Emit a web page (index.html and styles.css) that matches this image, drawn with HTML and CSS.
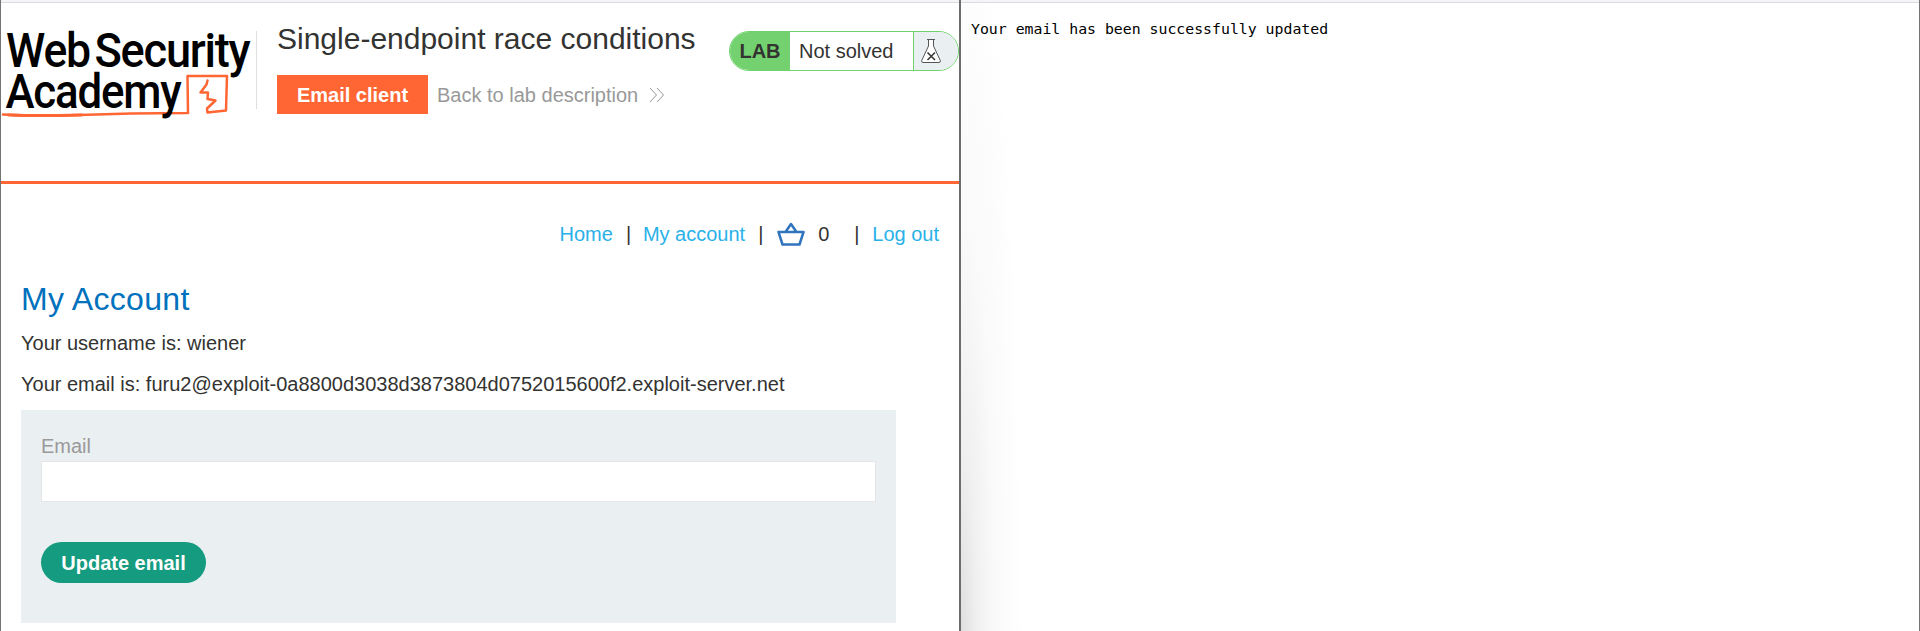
FILE: index.html
```html
<!DOCTYPE html>
<html lang="en">
<head>
<meta charset="utf-8">
<title>Single-endpoint race conditions</title>
<link rel="stylesheet" href="styles.css">
</head>
<body>
<main class="pane lab-pane">
  <header class="lab-header">
    <svg class="logo" width="255" height="100" viewBox="0 0 255 100" role="img" aria-label="Web Security Academy">
      <path class="sketch" d="M2 91.500 C20 92.500 36 93 60 92.500 L130 90.500 L187 90 L186.500 53 L226 53 L225 87.500 L206.500 89.500 L206 85.500 L214.500 77.500 L206.500 76 L207 69.500 L199.500 69.500 L205.500 61.500 L206.500 57.500"/>
      <path class="sketch thick" d="M8 92C30 93 60 92.500 80 92"/>
      <text class="logo-word" x="5" y="44" textLength="84" lengthAdjust="spacingAndGlyphs">Web</text>
      <text class="logo-word" x="93.500" y="44" textLength="155" lengthAdjust="spacingAndGlyphs">Security</text>
      <text class="logo-word" x="4.500" y="84.500" textLength="175" lengthAdjust="spacingAndGlyphs">Academy</text>
    </svg>
    <div class="title-block">
      <h1 class="title">Single-endpoint race conditions</h1>
      <div class="actions">
        <a class="email-client">Email client</a>
        <a class="back-link">Back to lab description
          <svg class="chevrons" width="16" height="16" viewBox="0 0 16 16"><path d="M1 1l6.500 7L1 15M8 1l6.500 7L8 15"/></svg>
        </a>
      </div>
    </div>
    <div class="lab-status">
      <span class="lab-tag">LAB</span>
      <span class="lab-text">Not solved</span>
      <span class="lab-icon">
        <svg width="20" height="26" viewBox="0 0 20 26"><path class="flask" d="M6 1.500H14M7.500 1.500V8L.7 22.500Q.3 24.500 2 24.500H18Q19.700 24.500 19.300 22.500L12.500 8V1.500"/><path class="cross" d="M6.500 14.500l7.500 7.500M14 14.500l-7.500 7.500"/></svg>
      </span>
    </div>
  </header>
  <nav class="nav">
    <a class="link home">Home</a><span class="bar">|</span>
    <a class="link account">My account</a><span class="bar">|</span>
    <svg class="basket" width="28" height="25" viewBox="0 0 28 25"><path d="M1.500 10H26.500L22.500 22.500H5.500ZM8.500 10L14 2L19.500 10"/></svg>
    <span class="count">0</span><span class="bar">|</span>
    <a class="link logout">Log out</a>
  </nav>
  <section class="content">
    <h2 class="heading">My Account</h2>
    <p class="info">Your username is: wiener</p>
    <p class="info"><span class="email-line">Your email is: furu2@exploit-0a8800d3038d3873804d0752015600f2.exploit-server.net</span></p>
    <form class="form">
      <label class="label" for="email">Email</label>
      <input class="input" id="email" type="email">
      <button class="button" type="button">Update email</button>
    </form>
  </section>
</main>
<section class="pane result-pane">
  <pre class="message">Your email has been successfully updated</pre>
</section>
</body>
</html>
```
FILE: styles.css
```css
* { box-sizing: border-box; }
body {
  margin: 0;
  height: 631px;
  display: grid;
  grid-template-columns: 961px 959px;
  overflow: hidden;
  background: #fff;
  color: #333332;
  font: 20px/24px "Liberation Sans", Arial, sans-serif;
}
.pane {
  height: 631px;
  background: linear-gradient(#f4f5f7 2px, #dadce0 2px, #dadce0 3px, transparent 3px);
}
.lab-pane { border-left: 1px solid #747474; border-right: 2px solid #6d6d6d; }
.lab-header {
  height: 184px;
  border-bottom: 3px solid #ff6633;
  display: flex;
  align-items: flex-start;
}
.logo { margin-top: 23px; height: 100px; flex: none; overflow: visible; }
.logo-word { font: 500 48px Roboto, sans-serif; letter-spacing: -1.3px; fill: #000; }
.sketch { fill: none; stroke: #ff6633; stroke-width: 2.5; stroke-linejoin: round; stroke-linecap: round; }
.thick { stroke-width: 3; }
.title-block {
  margin-top: 31px;
  width: 473px;
  height: 78px;
  padding-left: 21px;
  box-shadow: inset 1px 0 #dedfe1;
  flex: none;
}
.title { margin: -10px 0 0; font-size: 30px; line-height: 36px; font-weight: 400; white-space: nowrap; }
.actions { display: flex; align-items: center; margin-top: 18px; }
.email-client {
  width: 151px;
  height: 39px;
  background: #ff6633;
  color: #fff;
  font-weight: 700;
  line-height: 40px;
  text-align: center;
}
.back-link { display: flex; align-items: center; margin-left: 9px; color: #999; white-space: nowrap; }
.chevrons { margin-left: 11px; fill: none; stroke: #999; stroke-width: 1; }
.lab-status {
  margin-top: 31px;
  width: 230px;
  height: 40px;
  display: flex;
  border: 1px solid #70d46e;
  border-radius: 20px;
  overflow: hidden;
  line-height: 38px;
}
.lab-tag { width: 60px; background: #73d26f; font-weight: 700; text-align: center; }
.lab-text { width: 123px; padding-left: 9px; }
.lab-icon { flex: 1; border-left: 1px solid #70d46e; background: #eaeff2; padding: 6px 0 0 7px; line-height: 0; }
.flask { fill: #fff; stroke: #555; stroke-width: 1; }
.cross { fill: none; stroke: #333332; stroke-width: 1.5; }
.nav { display: flex; align-items: center; justify-content: flex-end; height: 30px; margin: 35px 20px 0 0; }
.link { color: #29b1e8; white-space: nowrap; }
.bar { width: 5px; text-align: center; margin: 0 13px; }
.home + .bar { margin-left: 14px; margin-right: 12px; }
.home { margin-right: -1px; }
.basket { margin: 1px 13px 0 1px; fill: none; stroke: #2f74bd; stroke-width: 2.5; stroke-linejoin: round; }
.count { margin-right: 12px; }
.content { padding: 31px 20px 0; }
.heading { margin: 0; font-size: 32px; line-height: 38px; font-weight: 400; letter-spacing: .32px; color: #0071bc; }
.info { margin: 13px 0 17px; }
.info + .info { margin-bottom: 14px; }
.form { width: 875px; height: 213px; background: #eaeff2; padding: 24px 20px 0; }
.label { display: block; color: #999; height: 27px; }
.input { display: block; width: 835px; height: 41px; border: 1px solid #e3e5e7; background: #fff; padding: 0 10px; font: inherit; }
.button {
  display: block;
  margin-top: 40px;
  width: 165px;
  height: 41px;
  padding: 2px 0 0;
  border: 0;
  border-radius: 21px;
  background: #159b7f;
  color: #fff;
  font: 700 20px "Liberation Sans", Arial, sans-serif;
}
.result-pane {
  border-right: 1px solid #747474;
  background:
    linear-gradient(#f4f5f7 2px, #dadce0 2px, #dadce0 3px, transparent 3px),
    radial-gradient(ellipse 62px 760px at 0 631px, #dfdfdf, #f0f0f0 25%, #fafafa 55%, #fff);
}
.message { margin: 19px 0 0 10px; font: 14.83px/20px "DejaVu Sans Mono", monospace; color: #000; }
```
